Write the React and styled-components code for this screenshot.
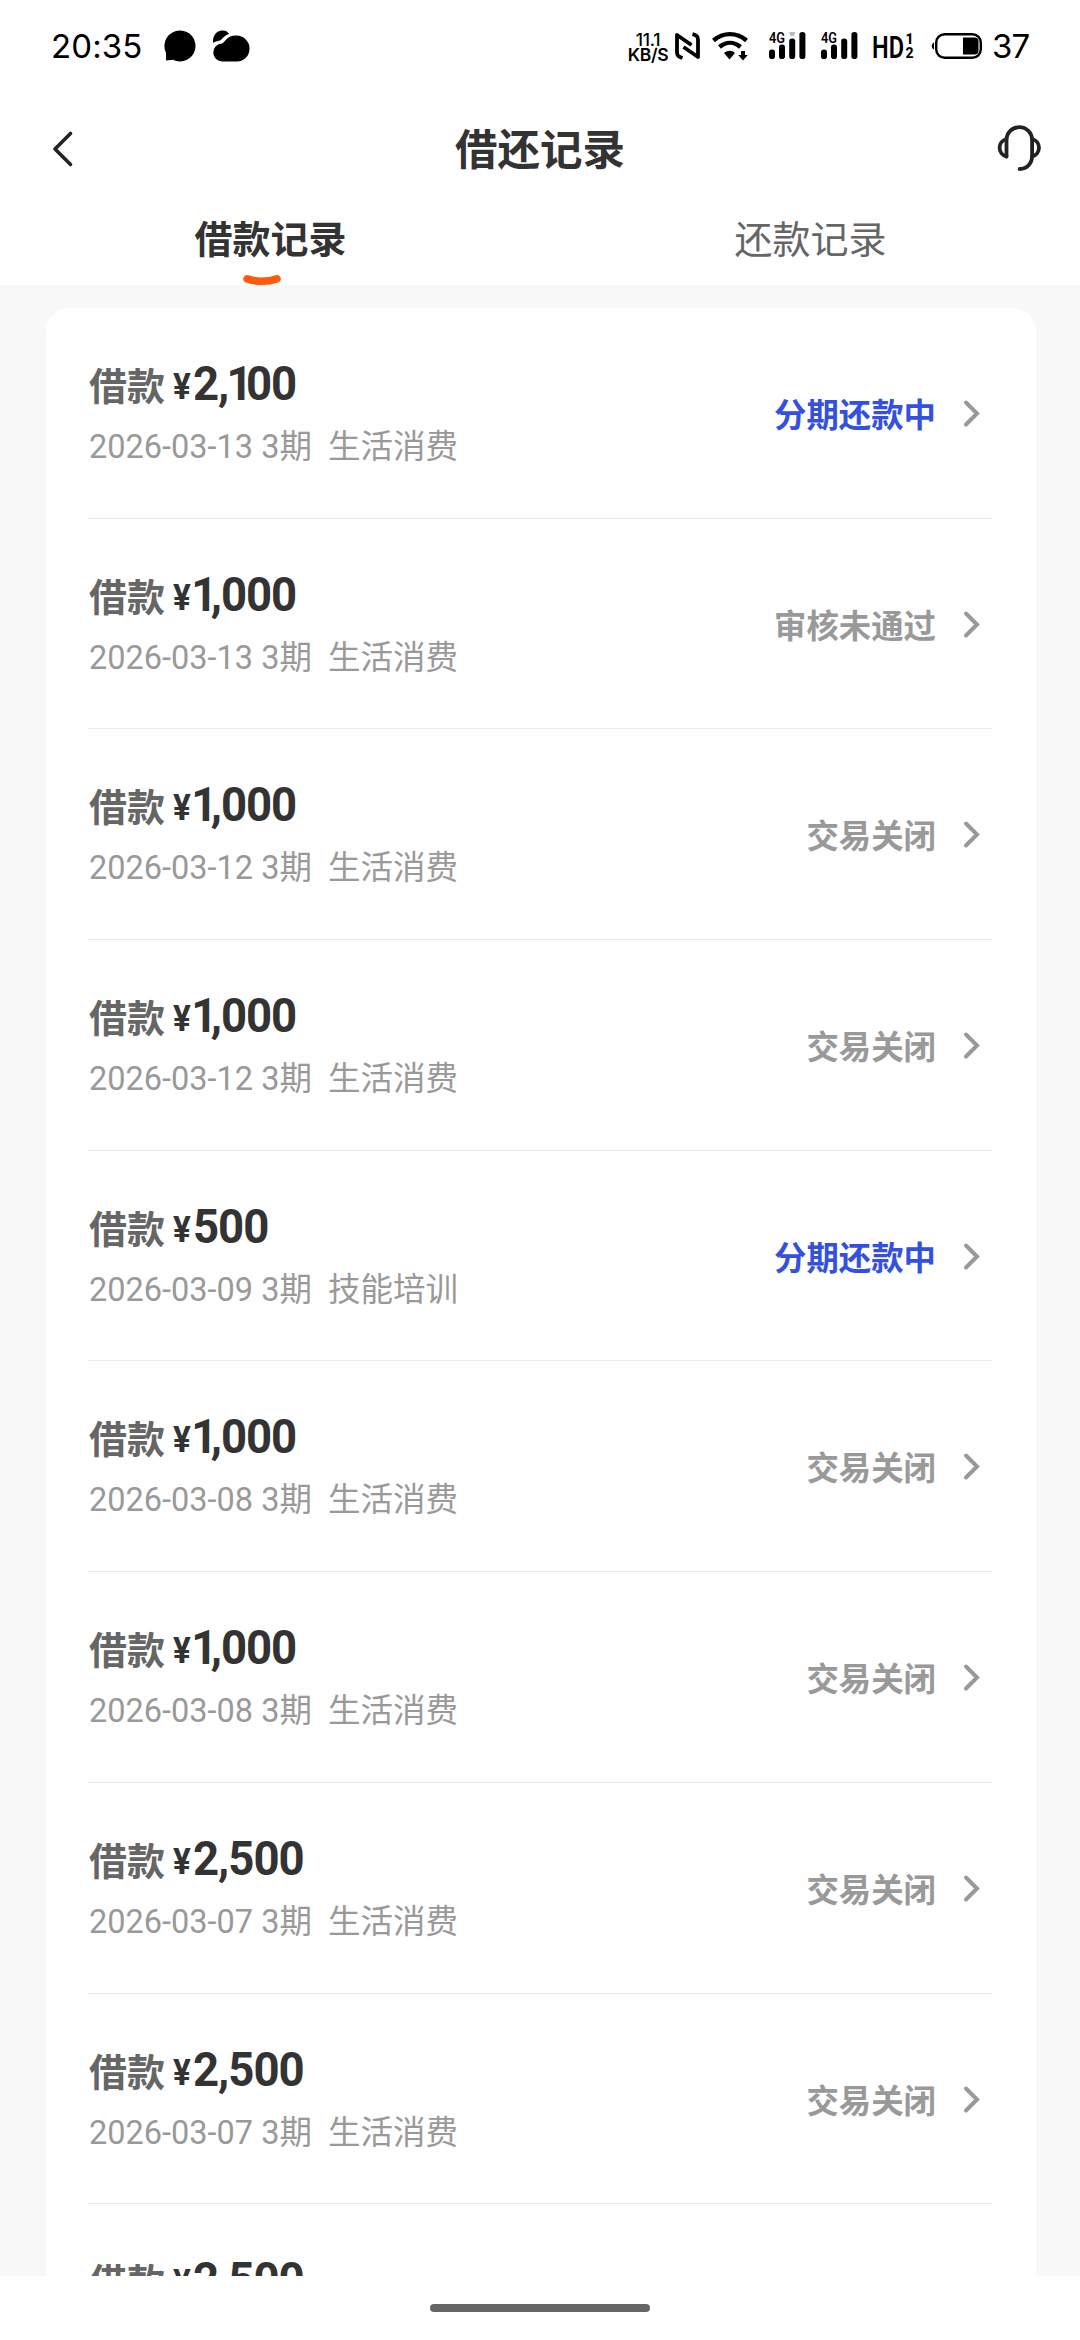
import styled, { createGlobalStyle } from "styled-components";

const GlobalStyle = createGlobalStyle`
  * {
    box-sizing: border-box;
  }

  body {
    margin: 0;
    background: #fff;
    font-family: Roboto, "Noto Sans CJK SC", sans-serif;
  }

  svg {
    display: block;
    flex: none;
    overflow: visible;
  }
`;

const Screen = styled.div`
  display: flex;
  flex-direction: column;
  width: 1080px;
  height: 2340px;
  overflow: hidden;
  background: #fff;
`;

const StatusBar = styled.header`
  display: flex;
  align-items: center;
  height: 92px;
  padding: 0 51px 0 51px;
  color: #000;
  font-family: Inter, sans-serif;
`;

const Clock = styled.span`
  width: 96px;
  font-size: 33px;
  line-height: 40px;
  letter-spacing: 0.1px;
`;

const StatusLeft = styled.div`
  display: flex;
  align-items: center;
  gap: 17px;
  flex: 1;
`;

const NetSpeed = styled.div`
  width: 42px;
  margin: 2px 6px 0 0;
  font-size: 17.5px;
  line-height: 15px;
  font-weight: 600;
  text-align: center;
  white-space: nowrap;

  span {
    display: block;
    letter-spacing: -0.3px;
  }

  span:first-child {
    font-weight: 500;
  }
`;

const StatusIcon = styled.svg`
  margin-right: ${({ $gap }) => $gap || 0}px;
`;

const Battery = styled.span`
  width: 37px;
  font-size: 33px;
  line-height: 40px;
  letter-spacing: -0.8px;
`;

const NavBar = styled.nav`
  display: flex;
  align-items: center;
  justify-content: space-between;
  height: 116px;
  padding: 0 36px 2px 51px;

  h1 {
    margin: 3px 15px 0 0;
    color: #333;
    font-size: 42.5px;
    line-height: 60px;
    font-weight: 700;
  }
`;

const NavSide = styled.div`
  display: flex;
  width: 60px;
  justify-content: ${({ $end }) => ($end ? "flex-end" : "flex-start")};
`;

const Tabs = styled.div`
  display: grid;
  grid-template-columns: 1fr 1fr;
  height: 77px;
`;

const Tab = styled.div`
  display: flex;
  flex-direction: column;
  align-items: center;
  padding: 6px 0 0 1px;
  color: ${({ $active }) => ($active ? "#333" : "#666")};
  font-size: 38px;
  line-height: 52px;
  font-weight: ${({ $active }) => ($active ? 700 : 400)};

  svg {
    margin: 9px 17px 0 0;
  }
`;

const Content = styled.main`
  height: 1991px;
  padding: 23px 44px 0 46px;
  overflow: hidden;
  background: #f8f8f8;
`;

const Card = styled.section`
  height: 2200px;
  padding: 0 44px 0 42px;
  border-radius: 24px;
  background: #fff;
`;

const Row = styled.div`
  display: flex;
  justify-content: space-between;
  height: 210.7px;
  padding: 50px 12px 0 1px;
  border-bottom: 1px solid #ebebeb;
`;

const LoanTitle = styled.div`
  display: flex;
  height: 56px;
  color: #666;
  font-size: 38px;
  line-height: 58px;
  font-weight: 700;
`;

const Yen = styled.span`
  width: 20px;
  margin-left: 8px;
  color: #333;
  font-size: 37px;
  line-height: 57px;
  transform: scaleX(0.9);
  transform-origin: left;
`;

const Amount = styled.span`
  display: flex;
  color: #333;
  font-size: 49px;
  line-height: 52px;
  transform: scaleX(0.93);
  transform-origin: left;
`;

const Digit = styled.span`
  width: ${({ $w }) => $w}px;
  text-indent: ${({ $w }) => ($w === 19 ? -2 : 0)}px;
`;

const LoanMeta = styled.div`
  margin-top: 8px;
  color: #999;
  font-size: 32.5px;
  line-height: 50px;
  font-weight: 400;
  white-space: pre;
`;

const Status = styled.div`
  display: flex;
  align-items: center;
  gap: 26px;
  height: 112px;
  color: ${({ $active }) => ($active ? "#3450e0" : "#999")};
  font-size: 32.4px;
  font-weight: 700;

  span {
    margin-top: -3px;
  }
`;

const HomeArea = styled.footer`
  display: flex;
  justify-content: center;
  height: 64px;
  padding-top: 28px;

  &::after {
    content: "";
    width: 220px;
    height: 8px;
    border-radius: 4px;
    background: #666;
  }
`;

const records = [
  { amount: "2,100", date: "2026-03-13", use: "生活消费", status: "分期还款中", active: true },
  { amount: "1,000", date: "2026-03-13", use: "生活消费", status: "审核未通过" },
  { amount: "1,000", date: "2026-03-12", use: "生活消费", status: "交易关闭" },
  { amount: "1,000", date: "2026-03-12", use: "生活消费", status: "交易关闭" },
  { amount: "500", date: "2026-03-09", use: "技能培训", status: "分期还款中", active: true },
  { amount: "1,000", date: "2026-03-08", use: "生活消费", status: "交易关闭" },
  { amount: "1,000", date: "2026-03-08", use: "生活消费", status: "交易关闭" },
  { amount: "2,500", date: "2026-03-07", use: "生活消费", status: "交易关闭" },
  { amount: "2,500", date: "2026-03-07", use: "生活消费", status: "交易关闭" },
  { amount: "2,500", date: "2026-03-07", use: "生活消费", status: "交易关闭" },
];

const digitWidth = (c) => {
  if (c === ",") return 11;
  if (c === "1") return 19;
  return 27;
};

const Signal = ({ gap, weak }) => (
  <StatusIcon $gap={gap} width="38" height="30" viewBox="0 0 38 30">
    <text x="0" y="12" fontFamily="Roboto" fontSize="15" fontWeight="600" textLength="16" lengthAdjust="spacingAndGlyphs">4G</text>
    <rect x="0" y="18.5" width="6" height="9.5" rx="2.8" />
    <rect x="10" y="13.5" width="6" height="14.5" rx="2.8" />
    <rect x="20.2" y="7.5" width="6" height="20.5" rx="2.8" />
    <rect x="30.4" y="1" width="6" height="27" rx="2.8" />
    {weak && <path d="M20 1h6.4l-1.5 4h-3.4z" fill="#bbb" />}
  </StatusIcon>
);

const Arrow = () => (
  <svg width="18" height="30" viewBox="0 0 18 30" fill="none" stroke="#999" strokeWidth="4" strokeLinecap="round">
    <path d="M4 3.5L15 14.5L4 25.5" />
  </svg>
);

const LoanRow = ({ item }) => (
  <Row>
    <div>
      <LoanTitle>
        借款
        <Yen>¥</Yen>
        <Amount>
          {item.amount.split("").map((c, i) => (
            <Digit key={i} $w={digitWidth(c)}>{c}</Digit>
          ))}
        </Amount>
      </LoanTitle>
      <LoanMeta>{`${item.date} 3期  ${item.use}`}</LoanMeta>
    </div>
    <Status $active={item.active}>
      <span>{item.status}</span>
      <Arrow />
    </Status>
  </Row>
);

const App = () => {
  return (
    <Screen>
      <GlobalStyle />
      <StatusBar>
        <StatusLeft>
          <Clock>20:35</Clock>
          <svg width="32" height="32" viewBox="0 0 32 32">
            <path d="M16 .5a15.5 15.5 0 1 1-7 29.3L2 30.5V23A15.5 15.5 0 0 1 16 .5z" />
          </svg>
          <svg width="37" height="32" viewBox="0 0 37 32">
            <path d="M0 13C-.5 5 4 0 10 .5c3 .2 5 1.500 6 3.500-4 1-6.500 5-9 6.500C4 11.500 2 11.500 0 13z" />
            <path d="M9 13.5C13 12 13 5.5 23 5.5a13 13 0 0 1 13.5 13C36.5 26 31 31.5 24 31.5H9.5A9 9 0 0 1 9 13.5z" />
          </svg>
        </StatusLeft>
        <NetSpeed>
          <span>11.1</span>
          <span>KB/S</span>
        </NetSpeed>
        <StatusIcon $gap={12} width="25" height="28" viewBox="0 0 25 28" fill="none" stroke="#000" strokeWidth="3.8" strokeLinejoin="round">
          <path d="M7.5 26C3 24.5 2 23.5 2 20V3l14.5 10" />
          <path d="M17.5 2C22 3.5 23 4.5 23 8v17L8.5 15" />
        </StatusIcon>
        <StatusIcon $gap={21} width="36" height="30" viewBox="0 0 36 30">
          <path d="M1.5 9.5C11 1 25 1 34.5 9.5" fill="none" stroke="#000" strokeWidth="4.4" />
          <path d="M7.5 16C14 10.5 22 10.5 28.5 16" fill="none" stroke="#000" strokeWidth="4.4" />
          <path d="M12 22c4-3 8-3 11 0l-5.5 6.5zM29 20h4v4h2.8L31 29.5 26.2 24H29z" />
        </StatusIcon>
        <Signal gap={14} weak />
        <Signal gap={13} />
        <StatusIcon $gap={15} width="44" height="30" viewBox="0 0 44 30">
          <text x="0" y="26.5" fontFamily="Roboto" fontSize="32" fontWeight="600" textLength="32" lengthAdjust="spacingAndGlyphs">HD</text>
          <text x="33.5" y="12.5" fontFamily="Roboto" fontSize="14" fontWeight="800">1</text>
          <text x="33.5" y="26.5" fontFamily="Roboto" fontSize="14" fontWeight="800">2</text>
        </StatusIcon>
        <StatusIcon $gap={9} width="52" height="28" viewBox="0 0 52 28">
          <path d="M3 10.5v7C0 16.5 0 11.5 3 10.5z" />
          <rect x="5.2" y="2.2" width="44.6" height="23.6" rx="8.5" fill="none" stroke="#000" strokeWidth="2.4" />
          <path d="M32 5.5h11.5a4 4 0 0 1 4 4v9a4 4 0 0 1-4 4H32z" />
        </StatusIcon>
        <Battery>37</Battery>
      </StatusBar>

      <NavBar>
        <NavSide>
          <svg width="24" height="40" viewBox="0 0 24 40" fill="none" stroke="#222" strokeWidth="3.6" strokeLinecap="round" strokeLinejoin="round">
            <path d="M19.5 4.5L4 20l15.5 15.5" />
          </svg>
        </NavSide>
        <h1>借还记录</h1>
        <NavSide $end>
          <svg width="50" height="52" viewBox="0 0 50 52" fill="none" stroke="#222" strokeWidth="3.8" strokeLinecap="round" strokeLinejoin="round">
            <path d="M12.5 33.5V17a12.8 12.8 0 0 1 25.6 0v15.5c0 8-5 13.5-12.5 13.5" />
            <path d="M12.5 16a9 9 0 0 0 0 17.5" />
            <path d="M38.1 16a9 9 0 0 1 0 17.5" />
          </svg>
        </NavSide>
      </NavBar>

      <Tabs>
        <Tab $active>
          借款记录
          <svg width="38" height="11" viewBox="0 0 38 11" fill="none" stroke="#ff5a0c" strokeWidth="7.5" strokeLinecap="round">
            <path d="M4 3.9Q19 8.8 34 3.9" />
          </svg>
        </Tab>
        <Tab>还款记录</Tab>
      </Tabs>

      <Content>
        <Card>
          {records.map((item, i) => (
            <LoanRow key={i} item={item} />
          ))}
        </Card>
      </Content>

      <HomeArea />
    </Screen>
  );
};

export default App;
